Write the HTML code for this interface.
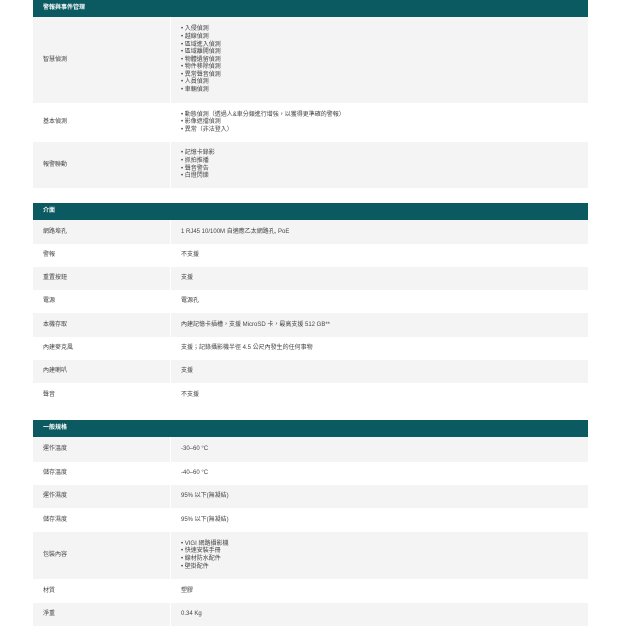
<!DOCTYPE html>
<html><head><meta charset="utf-8"><style>
*{margin:0;padding:0;box-sizing:border-box}
body{width:620px;height:620px;background:#fff;position:relative;overflow:hidden;font-family:"Liberation Sans","Noto Sans CJK TC",sans-serif;font-size:6px;color:#444}
.h{position:absolute;left:33px;width:555px;background:#0b5961;color:#fff;font-weight:bold;padding-left:10px;font-size:6px}
.r{position:absolute;left:33px;width:555px;display:flex;align-items:center;line-height:7.6px}
.g{background:#f4f4f4}
.r:before{content:"";position:absolute;left:137px;top:0;bottom:0;width:1px;background:#fff}
.l{width:137px;padding-left:10px;padding-top:1px}
.v{padding-left:11px;padding-top:1px}
</style></head><body>
<div class="h" style="top:0;height:17px;line-height:16px">警報與事件管理</div>
<div class="r g" style="top:17px;height:86px"><div class="l">智慧偵測</div><div class="v">• 入侵偵測<br>• 越線偵測<br>• 區域進入偵測<br>• 區域離開偵測<br>• 物體遺留偵測<br>• 物件移除偵測<br>• 異常聲音偵測<br>• 人員偵測<br>• 車輛偵測</div></div>
<div class="r" style="top:103px;height:39px"><div class="l">基本偵測</div><div class="v">• 動態偵測（透過人&amp;車分類進行增強，以獲得更準確的警報）<br>• 影像遮擋偵測<br>• 異常（非法登入）</div></div>
<div class="r g" style="top:142px;height:46px"><div class="l">報警聯動</div><div class="v">• 記憶卡錄影<br>• 抓拍推播<br>• 聲音警告<br>• 白燈閃爍</div></div>

<div class="h" style="top:203px;height:17px;line-height:17px">介面</div>
<div class="r g" style="top:220px;height:24px"><div class="l">網路埠孔</div><div class="v">1 RJ45 10/100M 自適應乙太網路孔, PoE</div></div>
<div class="r" style="top:244px;height:23px"><div class="l">警報</div><div class="v">不支援</div></div>
<div class="r g" style="top:267px;height:23px"><div class="l">重置按鈕</div><div class="v">支援</div></div>
<div class="r" style="top:290px;height:23px"><div class="l">電源</div><div class="v">電源孔</div></div>
<div class="r g" style="top:313px;height:24px"><div class="l">本機存取</div><div class="v">內建記憶卡插槽，支援 MicroSD 卡，最高支援 512 GB**</div></div>
<div class="r" style="top:337px;height:23px"><div class="l">內建麥克風</div><div class="v">支援；記錄攝影機半徑 4.5 公尺內發生的任何事物</div></div>
<div class="r g" style="top:360px;height:23px"><div class="l">內建喇叭</div><div class="v">支援</div></div>
<div class="r" style="top:383px;height:24px"><div class="l">聲音</div><div class="v">不支援</div></div>

<div class="h" style="top:420px;height:17px;line-height:17px">一般規格</div>
<div class="r g" style="top:437px;height:25px"><div class="l">運作溫度</div><div class="v">-30–60 °C</div></div>
<div class="r" style="top:462px;height:23px"><div class="l">儲存溫度</div><div class="v">-40–60 °C</div></div>
<div class="r g" style="top:485px;height:23px"><div class="l">運作濕度</div><div class="v">95% 以下(無凝結)</div></div>
<div class="r" style="top:508px;height:24px"><div class="l">儲存濕度</div><div class="v">95% 以下(無凝結)</div></div>
<div class="r g" style="top:532px;height:47px"><div class="l">包裝內容</div><div class="v">• VIGI 網路攝影機<br>• 快速安裝手冊<br>• 線材防水配件<br>• 壁掛配件</div></div>
<div class="r" style="top:579px;height:24px"><div class="l">材質</div><div class="v">塑膠</div></div>
<div class="r g" style="top:603px;height:23px"><div class="l">淨重</div><div class="v">0.34 Kg</div></div>
</body></html>
